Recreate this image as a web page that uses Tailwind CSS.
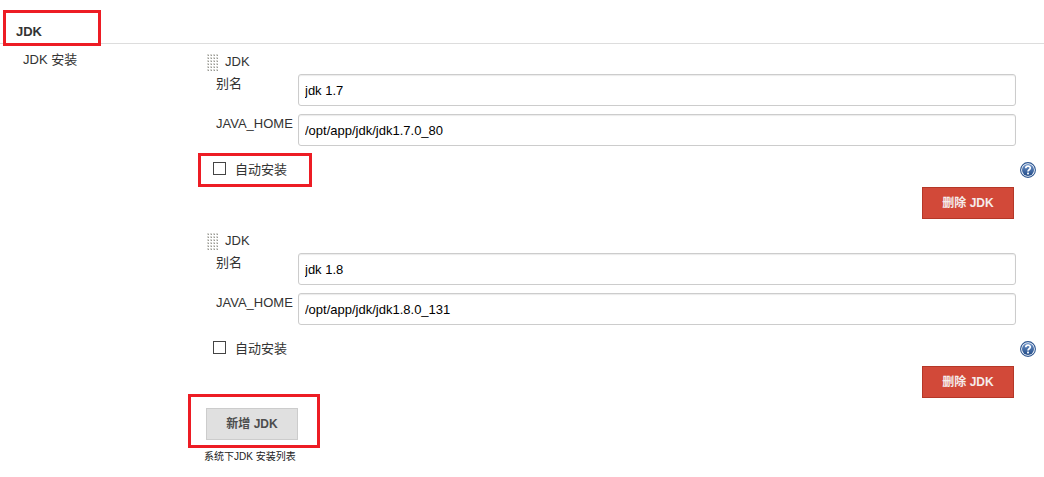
<!DOCTYPE html>
<html lang="zh-CN">
<head>
<meta charset="utf-8">
<title>JDK</title>
<script src="https://cdn.jsdelivr.net/npm/@tailwindcss/browser@4"></script>
</head>
<body class="bg-white font-['Liberation_Sans','Noto_Sans_CJK_SC',sans-serif] text-[13px] text-[#333]">
<svg class="absolute size-0" aria-hidden="true">
  <defs>
    <pattern id="dots" width="3" height="3" patternUnits="userSpaceOnUse">
      <rect width="2" height="2" fill="#d8d8d4"/><rect x="1" y="1" width="1" height="1" fill="#999994"/>
    </pattern>
    <linearGradient id="blue" x1="0" y1="0" x2="0" y2="1"><stop offset="0" stop-color="#6f94c9"/><stop offset="1" stop-color="#204a87"/></linearGradient>
    <symbol id="grip" viewBox="0 0 11 17"><rect width="11" height="17" fill="url(#dots)"/></symbol>
    <symbol id="help" viewBox="0 0 16 16">
      <circle cx="8" cy="8" r="7.4" fill="#fff" stroke="#2c5590" stroke-width="1.1"/>
      <circle cx="8" cy="8" r="6" fill="url(#blue)"/>
      <path d="M5.8 6.3C5.8 3.5 10.3 3.6 10.3 6.1C10.3 7.8 8 7.8 8 9.6" fill="none" stroke="#fff" stroke-width="1.7"/>
      <rect x="7.1" y="10.6" width="1.8" height="1.8" fill="#fff"/>
    </symbol>
  </defs>
</svg>
<main>
  <header class="relative flex h-11 items-center border-b border-[#ddd] px-4 pt-5">
    <h1 class="font-bold leading-[22px]">JDK</h1>
    <span class="absolute top-[10px] left-[3px] h-9 w-[98px] border-3 border-[#ed1c24]"></span>
  </header>
  <section class="flex pt-[6px]">
    <h2 class="w-[204px] shrink-0 pl-[23px] leading-5">JDK 安装</h2>
    <div class="min-w-0 flex-1">
      <div class="flex flex-col gap-[10px]">

        <fieldset class="min-w-0">
          <div class="flex h-6 items-start gap-[7px] pl-[3px] leading-6">
            <svg class="mt-1 h-[17px] w-[11px]"><use href="#grip"/></svg>JDK
          </div>
          <div class="flex flex-col gap-2 pr-7">
            <div class="flex">
              <label for="name1" class="w-[94px] shrink-0 pl-3 leading-5">别名</label>
              <input id="name1" value="jdk 1.7" class="h-8 min-w-0 flex-1 rounded-[3px] border border-[#ccc] px-[6px] text-black shadow-[inset_0_1px_1px_rgba(0,0,0,0.08)]">
            </div>
            <div class="flex">
              <label for="home1" class="w-[94px] shrink-0 pl-3 leading-5">JAVA_HOME</label>
              <input id="home1" value="/opt/app/jdk/jdk1.7.0_80" class="h-8 min-w-0 flex-1 rounded-[3px] border border-[#ccc] px-[6px] text-black shadow-[inset_0_1px_1px_rgba(0,0,0,0.08)]">
            </div>
          </div>
          <div class="relative mt-3 flex h-[22px] items-start justify-between pt-1 pr-2 pl-[9px]">
            <label class="flex items-start gap-[9px] leading-4"><input type="checkbox" class="size-[13px] appearance-none border border-[#444] bg-white checked:bg-[#444]">自动安装</label>
            <button type="button" aria-label="帮助" class="size-4"><svg class="size-4"><use href="#help"/></svg></button>
            <span class="pointer-events-none absolute -top-[5px] -left-[6px] h-[34px] w-[114px] border-3 border-[#ed1c24]"></span>
          </div>
          <div class="mt-[7px] flex justify-end pr-[30px]">
            <button type="button" class="h-8 w-[92px] border border-[#b53727] bg-[#d24939] text-xs font-bold text-[#f5eceb]">删除 JDK</button>
          </div>
        </fieldset>

        <fieldset class="min-w-0">
          <div class="flex h-6 items-start gap-[7px] pl-[3px] leading-6">
            <svg class="mt-1 h-[17px] w-[11px]"><use href="#grip"/></svg>JDK
          </div>
          <div class="flex flex-col gap-2 pr-7">
            <div class="flex">
              <label for="name2" class="w-[94px] shrink-0 pl-3 leading-5">别名</label>
              <input id="name2" value="jdk 1.8" class="h-8 min-w-0 flex-1 rounded-[3px] border border-[#ccc] px-[6px] text-black shadow-[inset_0_1px_1px_rgba(0,0,0,0.08)]">
            </div>
            <div class="flex">
              <label for="home2" class="w-[94px] shrink-0 pl-3 leading-5">JAVA_HOME</label>
              <input id="home2" value="/opt/app/jdk/jdk1.8.0_131" class="h-8 min-w-0 flex-1 rounded-[3px] border border-[#ccc] px-[6px] text-black shadow-[inset_0_1px_1px_rgba(0,0,0,0.08)]">
            </div>
          </div>
          <div class="mt-3 flex h-[22px] items-start justify-between pt-1 pr-2 pl-[9px]">
            <label class="flex items-start gap-[9px] leading-4"><input type="checkbox" class="size-[13px] appearance-none border border-[#444] bg-white checked:bg-[#444]">自动安装</label>
            <button type="button" aria-label="帮助" class="size-4"><svg class="size-4"><use href="#help"/></svg></button>
          </div>
          <div class="mt-[7px] flex justify-end pr-[30px]">
            <button type="button" class="h-8 w-[92px] border border-[#b53727] bg-[#d24939] text-xs font-bold text-[#f5eceb]">删除 JDK</button>
          </div>
        </fieldset>

        <div class="relative flex pl-[2px]">
          <button type="button" class="h-8 w-[92px] border border-[#ccc] bg-[#e0e0e0] text-xs font-bold text-[#4d4d4d]">新增 JDK</button>
          <span class="pointer-events-none absolute -top-[14px] -left-4 h-[54px] w-[132px] border-3 border-[#ed1c24]"></span>
        </div>
      </div>
      <p class="mt-2 text-[10px] leading-[18px] text-[#222]">系统下JDK 安装列表</p>
    </div>
  </section>
</main>
</body>
</html>
